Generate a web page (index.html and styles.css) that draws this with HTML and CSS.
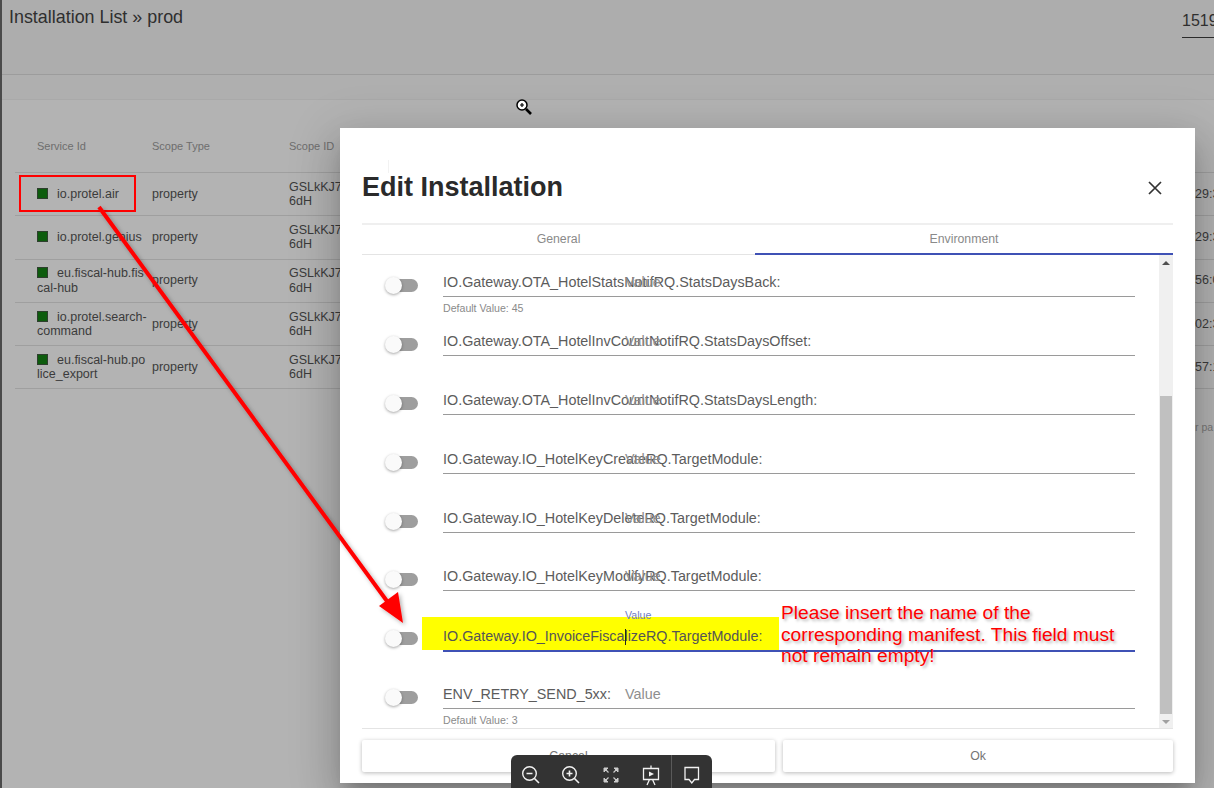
FILE: index.html
```html
<!DOCTYPE html>
<html lang="en">
<head>
  <meta charset="UTF-8" />
  <title>Installation List</title>
  <link rel="stylesheet" href="styles.css">
</head>
<body>
  <div id="page">
    <div id="header">
      <h1>Installation List » prod</h1>
      <div id="search">1519</div>
    </div>
    <div id="subbar"></div>

    <div id="table">
      <div class="row head">
        <div>Service Id</div>
        <div>Scope Type</div>
        <div>Scope ID</div>
      </div>
      <div class="row">
        <div class="service"><span class="status"></span>io.protel.air</div>
        <div>property</div>
        <div class="scope">GSLkKJ7<br>6dH</div>
        <div class="time">29:3</div>
      </div>
      <div class="row">
        <div class="service"><span class="status"></span>io.protel.genius</div>
        <div>property</div>
        <div class="scope">GSLkKJ7<br>6dH</div>
        <div class="time">29:3</div>
      </div>
      <div class="row">
        <div class="service"><span class="status"></span>eu.fiscal-hub.fis<br>cal-hub</div>
        <div>property</div>
        <div class="scope">GSLkKJ7<br>6dH</div>
        <div class="time">56:0</div>
      </div>
      <div class="row">
        <div class="service"><span class="status"></span>io.protel.search-<br>command</div>
        <div>property</div>
        <div class="scope">GSLkKJ7<br>6dH</div>
        <div class="time">02:3</div>
      </div>
      <div class="row">
        <div class="service"><span class="status"></span>eu.fiscal-hub.po<br>lice_export</div>
        <div>property</div>
        <div class="scope">GSLkKJ7<br>6dH</div>
        <div class="time">57:1</div>
      </div>
      <div id="perpage">r pa</div>
    </div>

    <div id="dialog">
      <div id="dialog-title">
        <h2>Edit Installation</h2>
        <svg class="close" width="14" height="14" viewBox="0 0 14 14"><path d="M1 1 13 13M13 1 1 13" stroke="#333" stroke-width="1.7" fill="none"/></svg>
      </div>
      <div id="tabs">
        <div class="tab">General</div>
        <div class="tab active">Environment</div>
      </div>
      <div id="env">
        <div id="env-list">
          <div class="env-row">
            <span class="toggle"></span>
            <div class="field">
              <div class="input"><span class="name">IO.Gateway.OTA_HotelStatsNotifRQ.StatsDaysBack:</span><span class="value">Value</span></div>
              <div class="hint">Default Value: 45</div>
            </div>
          </div>
          <div class="env-row">
            <span class="toggle"></span>
            <div class="field">
              <div class="input"><span class="name">IO.Gateway.OTA_HotelInvCountNotifRQ.StatsDaysOffset:</span><span class="value">Value</span></div>
            </div>
          </div>
          <div class="env-row">
            <span class="toggle"></span>
            <div class="field">
              <div class="input"><span class="name">IO.Gateway.OTA_HotelInvCountNotifRQ.StatsDaysLength:</span><span class="value">Value</span></div>
            </div>
          </div>
          <div class="env-row">
            <span class="toggle"></span>
            <div class="field">
              <div class="input"><span class="name">IO.Gateway.IO_HotelKeyCreateRQ.TargetModule:</span><span class="value">Value</span></div>
            </div>
          </div>
          <div class="env-row">
            <span class="toggle"></span>
            <div class="field">
              <div class="input"><span class="name">IO.Gateway.IO_HotelKeyDeleteRQ.TargetModule:</span><span class="value">Value</span></div>
            </div>
          </div>
          <div class="env-row">
            <span class="toggle"></span>
            <div class="field">
              <div class="input"><span class="name">IO.Gateway.IO_HotelKeyModifyRQ.TargetModule:</span><span class="value">Value</span></div>
            </div>
          </div>
          <div class="env-row">
            <span class="toggle"></span>
            <div class="field">
              <div class="input focused"></div>
            </div>
          </div>
          <div class="env-row">
            <span class="toggle"></span>
            <div class="field">
              <div class="input"><span class="name">ENV_RETRY_SEND_5xx:</span><span class="value">Value</span></div>
              <div class="hint">Default Value: 3</div>
            </div>
          </div>
        </div>
        <div id="scrollbar">
          <span class="arrow up"></span>
          <div id="track"><div id="thumb"></div></div>
          <span class="arrow down"></span>
        </div>
      </div>
      <div id="actions">
        <button class="cancel">Cancel</button>
        <button class="ok">Ok</button>
      </div>
    </div>

    <!-- annotations drawn over the screenshot -->
    <div id="highlight"></div>
    <div id="highlight-text">IO.Gateway.IO_InvoiceFiscalizeRQ.TargetModule:</div>
    <div id="float-label">Value</div>
    <div id="focus-line"></div>
    <div id="caret"></div>
    <div id="redbox"></div>
    <div id="note">Please insert the name of the corresponding manifest. This field must not remain empty!</div>
    <svg id="arrow" width="1214" height="788" viewBox="0 0 1214 788">
      <defs>
        <filter id="soft" x="-20%" y="-20%" width="140%" height="140%">
          <feDropShadow dx="2" dy="2" stdDeviation="2" flood-color="#000" flood-opacity="0.3"/>
        </filter>
      </defs>
      <g filter="url(#soft)">
        <path d="M99 207 392 608" stroke="#f00" stroke-width="4" fill="none"/>
        <path d="M403 623 379 606 398 592Z" fill="#f00"/>
      </g>
    </svg>

    <svg id="zoom-cursor" width="18" height="18" viewBox="0 0 18 18">
      <circle cx="7" cy="7" r="5" fill="#fff" stroke="#000" stroke-width="1.5"/>
      <path d="M5 7h4M7 5v4" stroke="#000" stroke-width="1.2"/>
      <path d="M11 11 16 16" stroke="#000" stroke-width="2.6"/>
    </svg>
    <div id="ibeam"></div>

    <div id="viewer">
      <svg class="tool" width="20" height="20" viewBox="0 0 20 20"><circle cx="8.5" cy="8.5" r="6.8" fill="none" stroke="#f2f2f2" stroke-width="1.4"/><path d="M5.5 8.5h6M13.5 13.5 18 18" stroke="#f2f2f2" stroke-width="1.6"/></svg>
      <svg class="tool" width="20" height="20" viewBox="0 0 20 20"><circle cx="8.5" cy="8.5" r="6.8" fill="none" stroke="#f2f2f2" stroke-width="1.4"/><path d="M5.5 8.5h6M8.5 5.5v6M13.5 13.5 18 18" stroke="#f2f2f2" stroke-width="1.6"/></svg>
      <svg class="tool" width="20" height="20" viewBox="0 0 20 20"><path d="M3 3h4L3 7ZM17 3h-4l4 4ZM3 17h4l-4-4ZM17 17h-4l4-4Z" fill="#ccc" stroke="#ccc"/><path d="M4 4 7.500 7.500M16 4l-3.500 3.500M4 16l3.500-3.500M16 16l-3.500-3.500" stroke="#ccc" stroke-width="1.200"/></svg>
      <svg class="tool" width="20" height="22" viewBox="0 0 20 22"><path d="M10 .5V3M2.500 3.500h15v11h-15ZM6 20l2.500-5.500M14 20l-2.500-5.500" fill="none" stroke="#f2f2f2" stroke-width="1.3"/><path d="M8 6.500 13 9 8 11.500Z" fill="#f2f2f2"/></svg>
      <span class="tool-sep"></span>
      <svg class="tool" width="20" height="22" viewBox="0 0 20 22"><path d="M3 2.500h13.500v12H12.500L9.800 18 7 14.500H3Z" fill="none" stroke="#f2f2f2" stroke-width="1.3"/></svg>
    </div>
  </div>
</body>
</html>
```

FILE: styles.css
```css
* {
  box-sizing: border-box;
}

html, body {
  margin: 0;
  padding: 0;
  height: 100%;
  overflow: hidden;
}

body {
  font-family: "Liberation Sans", Arial, sans-serif;
  background: #b4b4b4;
}

#page {
  position: relative;
  width: 1214px;
  height: 788px;
  overflow: hidden;
  background: #b3b3b3;
  border-left: 2px solid #4a4a4a;
}

#header {
  display: flex;
  justify-content: space-between;
  height: 75px;
  background: #adadad;
  border-bottom: 1px solid #9c9c9c;
  padding: 7px 0 0 7px;
}

h1 {
  margin: 0;
  font-size: 17.900px;
  font-weight: 400;
  line-height: 21px;
  color: #2f2f2f;
}

#search {
  width: 32px;
  height: 27px;
  margin-top: 4px;
  overflow: hidden;
  font-size: 16px;
  line-height: 20px;
  white-space: nowrap;
  color: #2f2f2f;
  border-bottom: 1px solid #2b2b2b;
}

#subbar {
  height: 25px;
  background: #afafaf;
  border-bottom: 1px solid #a9a9a9;
}

#table {
  margin: 0 0 0 13px;
  padding-top: 27px;
  width: 1199px;
  color: #3b3b3b;
  font-size: 12.500px;
}

.row {
  display: grid;
  grid-template-columns: 115px 137px 130px 1fr;
  align-items: center;
  height: 43.300px;
  padding-left: 22px;
  line-height: 14.500px;
  border-bottom: 1px solid #9f9f9f;
}

.row.head {
  height: 46px;
  padding-bottom: 6px;
  font-size: 11px;
  color: #6e6e6e;
}

.service {
  white-space: nowrap;
}

.status {
  display: inline-block;
  width: 11px;
  height: 11px;
  margin-right: 9px;
  vertical-align: -1px;
  background: #0d5c0d;
  border: 1px solid #2e3f2e;
}

.time {
  justify-self: end;
  width: 19px;
  overflow: hidden;
}

#perpage {
  width: 19px;
  margin: 32px 0 0 auto;
  font-size: 10.500px;
  color: #777;
  white-space: nowrap;
  overflow: hidden;
}

/* dialog */
#dialog {
  position: absolute;
  left: 338px;
  top: 128px;
  width: 855px;
  height: 655px;
  display: flex;
  flex-direction: column;
  padding: 0 22px 11px;
  background: #fff;
  box-shadow: 0 11px 15px -7px rgba(0,0,0,.2), 0 24px 38px 3px rgba(0,0,0,.14), 0 9px 46px 8px rgba(0,0,0,.12);
}

#dialog-title {
  display: flex;
  justify-content: space-between;
  align-items: center;
  height: 97px;
  padding: 24px 11px 0 0;
  border-bottom: 2px solid #efefef;
}

h2 {
  margin: 0;
  font-size: 27px;
  font-weight: 700;
  color: #2a2a2a;
}

#tabs {
  display: flex;
  height: 30px;
  border-bottom: 1px solid #e4e4e4;
}

.tab {
  width: 393px;
  text-align: center;
  font-size: 12.300px;
  line-height: 29px;
  color: #8a8a8a;
}

.tab.active {
  flex: 1;
  border-bottom: 2px solid #3f51b5;
  height: 30px;
}

#env {
  display: flex;
  height: 474px;
  overflow: hidden;
  border-bottom: 1px solid #e4e4e4;
}

#env-list {
  flex: 1;
  padding-top: 18px;
  overflow: hidden;
}

.env-row {
  display: flex;
  height: 58.900px;
  padding-left: 23px;
}

.toggle {
  position: relative;
  flex: none;
  width: 33px;
  height: 13px;
  margin: 6px 25px 0 0;
}

.toggle::before {
  content: '';
  position: absolute;
  left: 1px;
  top: 0;
  width: 32px;
  height: 13px;
  background: #9e9e9e;
  border-radius: 7px;
}

.toggle::after {
  content: '';
  position: absolute;
  left: 0;
  top: -2px;
  width: 17px;
  height: 17px;
  background: #fafafa;
  border-radius: 50%;
  box-shadow: 0 1px 3px rgba(0,0,0,.35);
}

.field {
  width: 692px;
}

.input {
  display: grid;
  height: 24px;
  line-height: 19px;
  font-size: 14.350px;
  color: #5c5c5c;
  white-space: nowrap;
  border-bottom: 1px solid #9a9a9a;
}

.input > span {
  grid-area: 1 / 1;
}

.value {
  margin-left: 182px;
  color: #8e8e8e;
}

.input.focused {
  border-bottom: 0;
}

.hint {
  margin-top: 5px;
  font-size: 10.600px;
  color: #8a8a8a;
}

#scrollbar {
  display: flex;
  flex-direction: column;
  width: 14px;
  margin-left: 23px;
  background: #f0f0f0;
}

.arrow {
  flex: none;
  width: 0;
  height: 0;
  margin: 6px 3px;
  border-left: 4px solid transparent;
  border-right: 4px solid transparent;
}

.arrow.up {
  border-bottom: 4px solid #505050;
}

.arrow.down {
  border-top: 4px solid #a0a0a0;
}

#track {
  flex: 1;
  padding-top: 125px;
}

#thumb {
  height: 318px;
  margin: 0 1px;
  background: #c0c0c0;
}

#actions {
  display: flex;
  gap: 8px;
  margin-top: 11px;
}

#actions button {
  height: 32px;
  font-family: inherit;
  font-size: 12.300px;
  color: #757575;
  background: #fff;
  border: 0;
  border-radius: 2px;
  box-shadow: 0 1px 4px rgba(0,0,0,.28);
}

.cancel {
  width: 413px;
}

.ok {
  flex: 1;
}

/* annotations */
#highlight {
  position: absolute;
  left: 420px;
  top: 617px;
  width: 357px;
  height: 33px;
  background: #ffff00;
}

#highlight-text {
  position: absolute;
  left: 441px;
  top: 627px;
  font-size: 14.350px;
  line-height: 19px;
  color: #555;
  white-space: nowrap;
}

#float-label {
  position: absolute;
  left: 623px;
  top: 608px;
  font-size: 10.600px;
  line-height: 14px;
  color: #6f7cc4;
}

#focus-line {
  position: absolute;
  left: 441px;
  top: 650px;
  width: 692px;
  height: 2px;
  background: #3f51b5;
}

#caret {
  position: absolute;
  left: 623px;
  top: 629px;
  width: 1px;
  height: 16px;
  background: #222;
}

#redbox {
  position: absolute;
  left: 17px;
  top: 175px;
  width: 117px;
  height: 37px;
  border: 2px solid #f00;
}

#note {
  position: absolute;
  left: 779px;
  top: 602px;
  width: 345px;
  font-size: 19.200px;
  line-height: 21.500px;
  color: #f00;
  text-shadow: 2px 2px 3px rgba(0,0,0,.3);
}

#arrow {
  position: absolute;
  left: -2px;
  top: 0;
}

#zoom-cursor {
  position: absolute;
  left: 513px;
  top: 98px;
}

#ibeam {
  position: absolute;
  left: 386px;
  top: 160px;
  width: 1px;
  height: 13px;
  background: #f2f2f2;
}

#viewer {
  position: absolute;
  left: 509px;
  top: 755px;
  width: 201px;
  height: 40px;
  display: flex;
  align-items: flex-start;
  padding: 10px 0 0 10px;
  background: #333;
  border-radius: 6px;
}

.tool {
  flex: none;
  margin-right: 20px;
}

.tool:nth-child(4) {
  margin-right: 10px;
}

.tool-sep {
  flex: none;
  width: 1px;
  height: 33px;
  margin: -10px 10px 0 0;
  background: #5a5a5a;
}
```
